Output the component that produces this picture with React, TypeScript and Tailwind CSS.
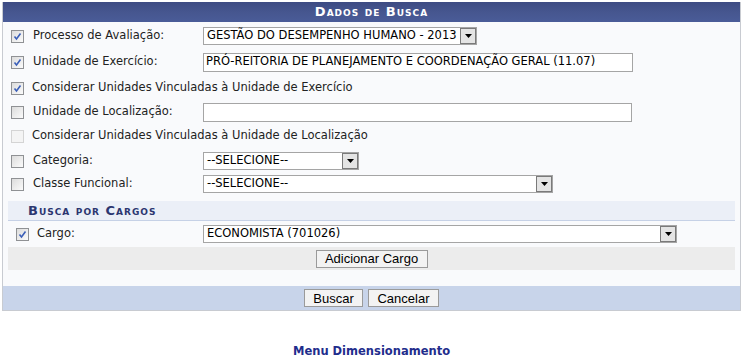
const font = { fontFamily: '"DejaVu Sans", Verdana, sans-serif' }
const btnFont = { fontFamily: '"Liberation Sans", Arial, sans-serif' }

function Check({ checked, faded }: { checked?: boolean; faded?: boolean }) {
  return (
    <span
      className={`inline-flex w-[13px] h-[13px] items-center justify-center border ${faded ? 'border-[#d4d4d4] bg-[#f4f4f4]' : 'border-[#8f9194] bg-gradient-to-br from-[#dcdcdc] to-[#fbfbfb]'}`}
    >
      {checked && (
        <svg width="9" height="9" viewBox="0 0 9 9">
          <path d="M1.5 4.5 L3.5 7 L7.5 1.5" fill="none" stroke="#3b5fb8" strokeWidth="1.6" />
        </svg>
      )}
    </span>
  )
}

function Select({ value, width }: { value: string; width: string }) {
  return (
    <div className={`flex items-center h-[18px] border border-[#a5a5a5] bg-white ${width}`}>
      <span className="flex-1 pl-[3px] text-[11.5px] text-black whitespace-nowrap">{value}</span>
      <span className="w-[16px] h-[16px] border border-[#7a7a7a] bg-[#e4e4e4] flex items-center justify-center">
        <svg width="7" height="4" viewBox="0 0 7 4">
          <path d="M0 0 H7 L3.5 4 Z" fill="#000" />
        </svg>
      </span>
    </div>
  )
}

function Input({ value, width }: { value?: string; width: string }) {
  return (
    <div className={`flex items-center h-[19px] border border-[#a5a5a5] bg-white pl-[2px] text-[11.5px] text-black whitespace-nowrap ${width}`}>
      {value}
    </div>
  )
}

function Row({ h, children }: { h: string; children: React.ReactNode }) {
  return <div className={`flex items-center ${h}`}>{children}</div>
}

function Label({ text }: { text: string }) {
  return <span className="w-[179px] pl-[9px] text-[11.5px] text-[#222]">{text}</span>
}

export default function App() {
  return (
    <div className="w-[743px] h-[359px] bg-white" style={font}>
      <div className="pt-[2px] px-[2px]">
        <div className="border border-[#c8cbd1] border-t-0 w-[739px] bg-[#f9fafc]">
          <div className="h-[20px] flex items-center justify-center bg-gradient-to-b from-[#3d4b83] via-[#46568f] to-[#4a5c98] text-white text-[13px] font-bold tracking-[1px] [font-variant:small-caps]">
            Dados de Busca
          </div>
          <div className="pl-[8px]">
            <Row h="h-[28px]">
              <Check checked />
              <Label text="Processo de Avaliação:" />
              <Select value="GESTÃO DO DESEMPENHO HUMANO - 2013" width="w-[274px]" />
            </Row>
            <Row h="h-[24px]">
              <Check checked />
              <Label text="Unidade de Exercício:" />
              <Input value="PRÓ-REITORIA DE PLANEJAMENTO E COORDENAÇÃO GERAL (11.07)" width="w-[430px]" />
            </Row>
            <Row h="h-[28px]">
              <Check checked />
              <span className="pl-[8px] text-[11.5px] text-[#222]">Considerar Unidades Vinculadas à Unidade de Exercício</span>
            </Row>
            <Row h="h-[20px]">
              <Check />
              <Label text="Unidade de Localização:" />
              <Input width="w-[429px]" />
            </Row>
            <Row h="h-[28px]">
              <Check faded />
              <span className="pl-[8px] text-[11.5px] text-[#222]">Considerar Unidades Vinculadas à Unidade de Localização</span>
            </Row>
            <Row h="h-[22px]">
              <Check />
              <Label text="Categoria:" />
              <Select value="--SELECIONE--" width="w-[156px]" />
            </Row>
            <Row h="h-[24px]">
              <Check />
              <Label text="Classe Funcional:" />
              <Select value="--SELECIONE--" width="w-[350px]" />
            </Row>
          </div>
          <div className="px-[5px] pt-[5px]">
            <div className="h-[20px] flex items-center pl-[20px] bg-[#ebeff7] border-b border-[#c6d1e6] text-[13px] font-bold tracking-[1px] text-[#2b3670] [font-variant:small-caps]">
              Busca por Cargos
            </div>
            <div className="flex items-center h-[26px] pl-[8px]">
              <Check checked />
              <span className="w-[174px] pl-[8px] text-[11.5px] text-[#222]">Cargo:</span>
              <Select value="ECONOMISTA (701026)" width="w-[474px]" />
            </div>
            <div className="h-[23px] flex items-center justify-center bg-[#ececec]">
              <button className="h-[18px] w-[112px] border border-[#9a9a9a] bg-[#f3f3f3] text-[13px] text-black leading-none" style={btnFont}>
                Adicionar Cargo
              </button>
            </div>
          </div>
          <div className="h-[16px]" />
          <div className="h-[24px] flex items-center justify-center gap-[5px] bg-[#c8d4ea]">
            <button className="h-[18px] w-[59px] border border-[#9a9a9a] bg-[#f3f3f3] text-[13px] text-black leading-none" style={btnFont}>
              Buscar
            </button>
            <button className="h-[18px] w-[71px] border border-[#9a9a9a] bg-[#f3f3f3] text-[13px] text-black leading-none" style={btnFont}>
              Cancelar
            </button>
          </div>
        </div>
      </div>
      <div className="pt-[32px] text-center text-[11.5px] font-bold text-[#1f2d8c]">Menu Dimensionamento</div>
    </div>
  )
}
